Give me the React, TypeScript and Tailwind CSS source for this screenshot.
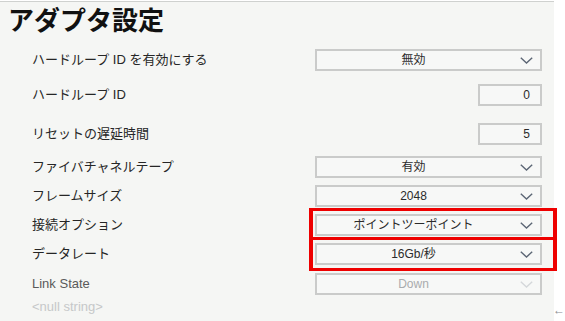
import React from "react";

const FONT = {
  fontFamily: '"Liberation Sans", "Noto Sans CJK JP", sans-serif',
};

const Chevron = ({ faded = false }: { faded?: boolean }) => (
  <svg
    width="13"
    height="7"
    viewBox="0 0 13 7"
    className={faded ? "text-[#d4d7da]" : "text-[#5c6675]"}
  >
    <path d="M0.8 0.8 L6.5 6 L12.2 0.8" fill="none" stroke="currentColor" strokeWidth="1.4" />
  </svg>
);

const Select = ({ value, disabled = false }: { value: string; disabled?: boolean }) => (
  <div className="w-[227px] h-[22px] border-2 border-[#cacbca] bg-[#f7f8f7] flex items-center pl-[4px] pr-[7px]">
    <span
      className={`flex-1 text-center text-[12px] pr-[14px] ${
        disabled ? "text-[#a9abad]" : "text-[#2b2b2b]"
      }`}
    >
      {value}
    </span>
    <Chevron faded={disabled} />
  </div>
);

const NumberBox = ({ value }: { value: string }) => (
  <div className="w-[64px] h-[22px] border-2 border-[#cacbca] bg-[#f7f8f7] flex items-center justify-end pr-[10px] text-[12px] text-[#2b2b2b]">
    {value}
  </div>
);

const Row = ({
  label,
  labelClass = "text-[#262626]",
  mt,
  children,
}: {
  label: string;
  labelClass?: string;
  mt: string;
  children?: React.ReactNode;
}) => (
  <div className={`flex items-center justify-between h-[22px] pl-[32px] pr-[12px] ${mt}`}>
    <span className={`text-[13px] ${labelClass}`}>{label}</span>
    {children}
  </div>
);

const App = () => {
  return (
    <div className="relative w-[565px] h-[321px] overflow-hidden bg-white flex" style={FONT}>
      <div className="w-[558px] h-full pt-[1px]">
        <div className="h-full border-t border-[#cfd1cf] bg-[#f5f6f4]">
          <h1 className="pl-[8px] pt-[4px] h-[30px] text-[26px] leading-[30px] font-bold text-[#111]">
            アダプタ設定
          </h1>
          <Row label="ハードループ ID を有効にする" mt="mt-[17px]">
            <Select value="無効" />
          </Row>
          <Row label="ハードループ ID" mt="mt-[13px]">
            <NumberBox value="0" />
          </Row>
          <Row label="リセットの遅延時間" mt="mt-[17px]">
            <NumberBox value="5" />
          </Row>
          <Row label="ファイバチャネルテープ" mt="mt-[11px]">
            <Select value="有効" />
          </Row>
          <Row label="フレームサイズ" mt="mt-[7px]">
            <Select value="2048" />
          </Row>
          <Row label="接続オプション" mt="mt-[7px]">
            <Select value="ポイントツーポイント" />
          </Row>
          <Row label="データレート" mt="mt-[7px]">
            <Select value="16Gb/秒" />
          </Row>
          <Row label="Link State" labelClass="text-[#5a5a5a]" mt="mt-[8px]">
            <Select value="Down" disabled />
          </Row>
          <Row label="<null string>" labelClass="text-[#c6c8c9] text-[12px]" mt="mt-[1px]" />
        </div>
      </div>
      <div className="flex-1 flex items-end pb-[2px]">
        <span className="text-[12px] text-[#8a8d90] -ml-[1px]">←</span>
      </div>

      {/* highlight boxes */}
      <div className="absolute left-[309px] top-[208px] w-[248px] h-[32px] border-x-4 border-y-[3px] border-[#ee0000]" />
      <div className="absolute left-[309px] top-[237px] w-[248px] h-[34px] border-x-4 border-y-[3px] border-[#ee0000]" />
    </div>
  );
};

export default App;
